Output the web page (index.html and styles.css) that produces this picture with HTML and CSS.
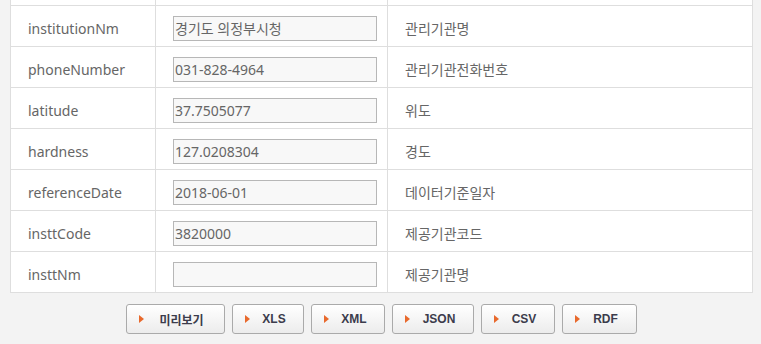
FILE: index.html
```html
<!DOCTYPE html>
<html lang="ko">
  <head>
    <meta charset="UTF-8" />
    <meta name="viewport" content="width=device-width, initial-scale=1.0" />
    <title>Open API</title>
    <link rel="stylesheet" href="styles.css">
  </head>
  <body>
  <div class="container">
    <table class="param-table">
      <tbody>
        <tr>
          <td class="col-name"></td>
          <td class="col-value"></td>
          <td class="col-desc"></td>
        </tr>
        <tr>
          <td class="col-name">institutionNm</td>
          <td class="col-value"><input type="text" class="param-input" value="경기도 의정부시청"></td>
          <td class="col-desc">관리기관명</td>
        </tr>
        <tr>
          <td class="col-name">phoneNumber</td>
          <td class="col-value"><input type="text" class="param-input" value="031-828-4964"></td>
          <td class="col-desc">관리기관전화번호</td>
        </tr>
        <tr>
          <td class="col-name">latitude</td>
          <td class="col-value"><input type="text" class="param-input" value="37.7505077"></td>
          <td class="col-desc">위도</td>
        </tr>
        <tr>
          <td class="col-name">hardness</td>
          <td class="col-value"><input type="text" class="param-input" value="127.0208304"></td>
          <td class="col-desc">경도</td>
        </tr>
        <tr>
          <td class="col-name">referenceDate</td>
          <td class="col-value"><input type="text" class="param-input" value="2018-06-01"></td>
          <td class="col-desc">데이터기준일자</td>
        </tr>
        <tr>
          <td class="col-name">insttCode</td>
          <td class="col-value"><input type="text" class="param-input" value="3820000"></td>
          <td class="col-desc">제공기관코드</td>
        </tr>
        <tr>
          <td class="col-name">insttNm</td>
          <td class="col-value"><input type="text" class="param-input" value=""></td>
          <td class="col-desc">제공기관명</td>
        </tr>
      </tbody>
    </table>
    <div class="btn-area">
      <button class="btn btn-preview">미리보기</button>
      <button class="btn btn-xls">XLS</button>
      <button class="btn btn-xml">XML</button>
      <button class="btn btn-json">JSON</button>
      <button class="btn btn-csv">CSV</button>
      <button class="btn btn-rdf">RDF</button>
    </div>
  </div>
  </body>
</html>
```

FILE: styles.css
```css
body {
  margin: 0;
  background-color: #f3f3f3;
  font-family: "Noto Sans", "Noto Sans CJK KR", sans-serif;
}
.container {
  padding: 0 8px 0 10px;
}
.param-table {
  width: 743px;
  margin-top: -36px;
  border-collapse: collapse;
  background-color: #fff;
  table-layout: fixed;
}
.param-table td {
  height: 41px;
  padding: 4px 0 0 17px;
  border: 1px solid #dedede;
  font-size: 14px;
  color: #666;
  box-sizing: border-box;
}
.col-name {
  width: 145px;
}
.col-value {
  width: 232px;
}
.param-input {
  display: block;
  width: 204px;
  height: 25px;
  margin: 0;
  padding: 0 0 0 1px;
  box-sizing: border-box;
  border: 1px solid #b7b7b7;
  background-color: #f8f8f8;
  font-family: "Noto Sans", "Noto Sans CJK KR", sans-serif;
  font-size: 14px;
  color: #666;
}
.btn-area {
  display: flex;
  justify-content: center;
  gap: 7px;
  margin-top: 11px;
}
.btn {
  height: 30px;
  padding: 0 0 0 12px;
  border: 1px solid #aaa;
  border-radius: 3px;
  background: linear-gradient(#ffffff, #ececec);
  font-family: "Liberation Sans", "Noto Sans CJK KR", sans-serif;
  font-size: 12px;
  font-weight: bold;
  color: #3c3c4c;
  display: flex;
  align-items: center;
  justify-content: center;
  position: relative;
}
.btn::before {
  content: "";
  position: absolute;
  left: 12px;
  top: 10px;
  border-left: 5px solid #e8692c;
  border-top: 4px solid transparent;
  border-bottom: 4px solid transparent;
}
.btn-preview {
  width: 99px;
}
.btn-xls {
  width: 72px;
}
.btn-xml {
  width: 74px;
}
.btn-json {
  width: 82px;
}
.btn-csv {
  width: 74px;
}
.btn-rdf {
  width: 75px;
}
```
